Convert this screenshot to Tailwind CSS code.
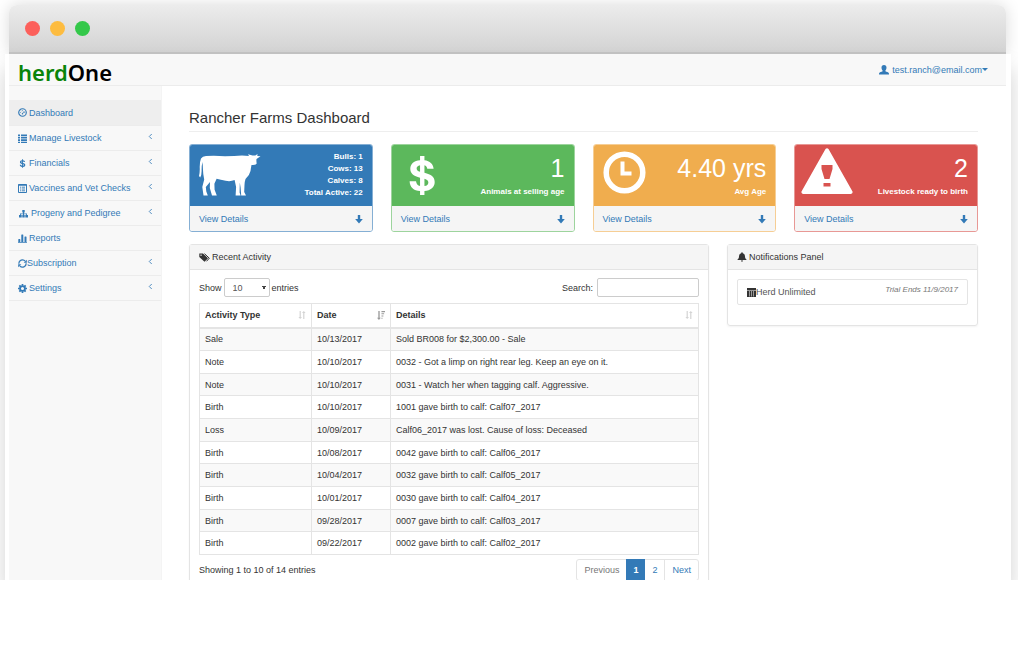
<!DOCTYPE html>
<html lang="en">
<head>
<meta charset="utf-8">
<meta name="viewport" content="width=device-width, initial-scale=1">
<title>herdOne - Rancher Farms Dashboard</title>
<script src="https://cdn.jsdelivr.net/npm/@tailwindcss/browser@4"></script>
</head>
<body class="flex h-screen flex-col bg-white pb-[66px] font-['Liberation_Sans',Arial,sans-serif] text-[9px] leading-3 text-[#333]">

<svg class="hidden" aria-hidden="true">
  <symbol id="down" viewBox="0 0 10 12"><path d="M3.500 1h3v5h3.300L5 11.500.2 6h3.300z"/></symbol>
  <symbol id="left" viewBox="0 0 6 8"><path d="M4.500 1 1.500 4l3 3" fill="none" stroke="currentColor" stroke-width="1"/></symbol>
  <symbol id="dollar" viewBox="0 0 28 42"><path d="M12 1h4.500v4.500c5.500.6 9 3.700 9.400 8.700h-6.500c-.3-2-1.200-3.200-2.900-3.700v7.700c6.800 1.700 10.500 4 10.500 9.500 0 5.400-4 8.700-10.500 9.300V41H12v-4C5.500 36.400 1.600 33 1.300 26.800h6.600c.3 2.700 1.700 4.300 4.100 4.900v-8.400C5.500 21.600 2 19.400 2 14.200c0-5 4-8.200 10-8.700zm0 9.400c-2.300.4-3.500 1.600-3.500 3.400 0 1.700 1 2.700 3.500 3.400zm4.500 13.900v7.500c2.700-.4 4-1.700 4-3.700 0-2-1.200-3-4-3.800z"/></symbol>
  <symbol id="sort" viewBox="0 0 10 10"><path d="M2 0h1.500v7.500H5L2.750 10 .5 7.500H2zM6.500 10H8V2.500h1.500L7.250 0 5 2.500h1.500z"/></symbol>
</svg>

<div class="flex min-h-0 flex-1 flex-col overflow-hidden pt-[5px] pr-[7px] pl-[5px]">

    <div class="mr-[5px] ml-1 flex h-[49px] shrink-0 items-center gap-[10px] rounded-t-lg border-b-2 border-[#c4c4c4] bg-linear-to-b from-[#ececec] to-[#d3d3d3] px-4 shadow-[0_0_16px_rgba(0,0,0,0.15)]">
      <span class="size-[15px] rounded-full bg-[#fc605b]"></span>
      <span class="size-[15px] rounded-full bg-[#fdbc40]"></span>
      <span class="size-[15px] rounded-full bg-[#34c84a]"></span>
    </div>

    <div class="flex min-h-0 flex-1 flex-col bg-white pr-[5px] pl-1 shadow-[0_14px_20px_rgba(0,0,0,0.18)]">
      <header class="flex h-8 shrink-0 items-center justify-between border-b border-[#ececec] bg-[#f8f8f8] pr-[18px] pl-[9px]">
        <a href="#" class="pt-1 font-['Noto_Sans','Open_Sans',sans-serif] text-[22px] leading-6 font-semibold text-black"><span class="text-[#0a840a]">herd</span>One</a>
        <button type="button" class="flex items-center text-[#337ab7]">
          <svg class="mr-[3px] size-[10px]" viewBox="0 0 10 10" fill="currentColor"><path d="M5 0c1.700 0 2.500 1 2.500 2.500 0 1.300-.5 2.300-1.100 3v.8c1.100.6 3 1 3.400 1.700.2.400.2 1 .2 1.500H0c0-.5 0-1.100.2-1.500.4-.7 2.300-1.100 3.400-1.700v-.8c-.6-.7-1.100-1.700-1.100-3C2.500 1 3.300 0 5 0z"/></svg>
          test.ranch@email.com
          <svg class="h-[3px] w-[6px]" viewBox="0 0 6 3" fill="currentColor"><path d="M0 0h6L3 3z"/></svg>
        </button>
      </header>

      <div class="flex min-h-0 flex-1">
        <nav class="w-[153px] shrink-0 border-r border-[#f4f4f4] bg-[#f8f8f8] pt-[14px] text-[#337ab7]">
          <ul class="*:h-[25px] *:border-b *:border-[#ececec]">
            <li class="h-[26px]! bg-[#eee]"><a href="#" class="flex h-full items-center gap-[2px] px-[9px]">
              <svg class="size-[9px]" viewBox="0 0 10 10" fill="none" stroke="currentColor"><circle cx="5" cy="5" r="4.200" stroke-width="1.300"/><path d="M5 6.200 7 3.500M2.500 5h.8M3.400 3l.5.600M5 2.200v.8M7 5h.8" stroke-width=".9"/><circle cx="5" cy="6.300" r=".8" fill="currentColor" stroke="none"/></svg>
              Dashboard</a></li>
            <li><a href="#" class="flex h-full items-center gap-[2px] px-[9px]">
              <svg class="size-[9px]" viewBox="0 0 9 9" fill="currentColor"><path d="M0 .5h2v1.700H0zM3 .5h6v1.700H3zM0 2.900h2v1.700H0zM3 2.900h6v1.700H3zM0 5.300h2V7H0zM3 5.300h6V7H3zM0 7.700h2V9H0zM3 7.700h6V9H3z"/></svg>
              Manage Livestock<svg class="mr-[-1px] mb-1 ml-auto h-[7px] w-[5px]"><use href="#left"/></svg></a></li>
            <li><a href="#" class="flex h-full items-center gap-[2px] px-[9px]">
              <svg class="size-[9px]" fill="currentColor"><use href="#dollar"/></svg>
              Financials<svg class="mr-[-1px] mb-1 ml-auto h-[7px] w-[5px]"><use href="#left"/></svg></a></li>
            <li><a href="#" class="flex h-full items-center gap-[2px] px-[9px]">
              <svg class="size-[9px]" viewBox="0 0 9 9" fill="none" stroke="currentColor"><path d="M.5.500h8v8h-8z"/><path d="M.5 1h8" stroke-width="1.500"/><path d="M2 3.200h1M3.700 3.200H7M2 5h1M3.700 5H7M2 6.800h1M3.700 6.800H7" stroke-width=".9"/></svg>
              Vaccines and Vet Checks<svg class="mr-[-1px] mb-1 ml-auto h-[7px] w-[5px]"><use href="#left"/></svg></a></li>
            <li><a href="#" class="flex h-full items-center gap-[3px] px-[9px]">
              <svg class="ml-px size-[9px]" viewBox="0 0 9 9" fill="currentColor"><path d="M3.300 1h2.400v2.500H5v1h3V6h1v2.500H6.300V6h.9v-.8H5V6h.7v2.500H3.300V6H4v-.8H1.800V6h.9v2.500H0V6h1V4.500h3v-1h-.7z"/></svg>
              Progeny and Pedigree<svg class="mr-[-1px] mb-1 ml-auto h-[7px] w-[5px]"><use href="#left"/></svg></a></li>
            <li><a href="#" class="flex h-full items-center gap-[2px] px-[9px]">
              <svg class="size-[9px]" viewBox="0 0 9 9" fill="currentColor"><path d="M.3 5.500q0-.5.500-.5h1q.5 0 .5.500V8H.300zM3.300 1q0-.5.500-.5h1q.5 0 .5.500v7h-2zM6.500 3q0-.5.500-.5h1q.5 0 .5.500v5h-2zM0 8.200h9V9H0z"/></svg>
              Reports</a></li>
            <li><a href="#" class="flex h-full items-center px-[9px]">
              <svg class="size-[9px]" viewBox="0 0 10 10" fill="none" stroke="currentColor" stroke-width="1.400"><path d="M1 5.200A4 4 0 0 1 8 2.300M9 4.800A4 4 0 0 1 2 7.700"/><path d="M9.800.700v3.500H6.300zM.2 9.300V5.800h3.500z" fill="currentColor" stroke="none"/></svg>
              Subscription<svg class="mr-[-1px] mb-1 ml-auto h-[7px] w-[5px]"><use href="#left"/></svg></a></li>
            <li><a href="#" class="flex h-full items-center gap-[2px] px-[9px]">
              <svg class="size-[9px]" viewBox="0 0 10 10" fill="none" stroke="currentColor"><circle cx="5" cy="5" r="2.700" stroke-width="2"/><path d="M5 0v2M5 8v2M0 5h2M8 5h2M1.500 1.500l1.400 1.400M7.100 7.100l1.400 1.400M8.500 1.500 7.100 2.900M2.900 7.100 1.500 8.500" stroke-width="1.900"/></svg>
              Settings<svg class="mr-[-1px] mb-1 ml-auto h-[7px] w-[5px]"><use href="#left"/></svg></a></li>
          </ul>
        </nav>

        <main class="min-w-0 flex-1 overflow-hidden pr-7 pl-[27px]">
          <h1 class="mb-3 border-b border-[#eee] pt-[22px] pb-[3px] text-[15px] leading-5">Rancher Farms Dashboard</h1>

          <section class="grid grid-cols-4 gap-[18px]">
            <article class="overflow-hidden rounded-[3px] border border-[#337ab7]/60">
              <div class="flex h-[61px] items-start justify-between bg-[#337ab7] px-[9px] text-white">
                <svg class="mt-[9px] h-[42px] w-[62px]" viewBox="0 0 62 42" fill="currentColor"><path d="M2 4.500Q3.500 2 7 2q9-.8 19 .3Q36 2 43 1.500l7 .5-1-1.800L53.500 1.500h2.800L58.500 0l-.2 2L61.500 2.300 57.500 5q-.3 2 .2 4.500Q56.500 11.500 52.500 11q-.6 3-1 6-1 4.500-5 8-1 3-1 6l-.3 7 1.800 3.500h-4.800l-.6-8-.8-5-.2 10 1 3h-5l.5-8.500-1.500-7q-4 1.800-9 .8-5-1.200-9-2l-2.200 5 .2 6 2.200 5.700H13L10.800 34l.2-6-4.200 5 .5 4.500 1.500 4H4.500L3.300 33l1.900-7.500Q4 20 4 16L3.600 8Q2.600 11 2.600 16q.2 5-1.400 7.500L0 22q1-4 .7-9Q.7 7.500 2 4.500z"/></svg>
                <p class="pt-[6px] text-right text-[8px] leading-3 font-bold">Bulls: 1<br>Cows: 13<br>Calves: 8<br>Total Active: 22</p>
              </div>
              <a href="#" class="flex h-[25px] items-center justify-between bg-[#f5f5f5] px-[9px] text-[#337ab7]">View Details<svg class="h-[10px] w-[8px]" fill="currentColor"><use href="#down"/></svg></a>
            </article>

            <article class="overflow-hidden rounded-[3px] border border-[#5cb85c]/60">
              <div class="flex h-[61px] items-start justify-between bg-[#5cb85c] px-[9px] text-white">
                <svg class="mt-[10px] ml-[7px] h-[41px] w-[28px]" fill="currentColor"><use href="#dollar"/></svg>
                <p class="pt-[9px] text-right text-[8px] leading-3 font-bold"><span class="block text-[25px] leading-7 font-normal">1</span><span class="mt-1 block">Animals at selling age</span></p>
              </div>
              <a href="#" class="flex h-[25px] items-center justify-between bg-[#f5f5f5] px-[9px] text-[#337ab7]">View Details<svg class="h-[10px] w-[8px]" fill="currentColor"><use href="#down"/></svg></a>
            </article>

            <article class="overflow-hidden rounded-[3px] border border-[#f0ad4e]/60">
              <div class="flex h-[61px] items-start justify-between bg-[#f0ad4e] px-[9px] text-white">
                <svg class="mt-[6px] size-[43px]" viewBox="0 0 43 43" fill="none" stroke="currentColor"><circle cx="21.500" cy="21.500" r="18.300" stroke-width="5.500"/><path d="M19.500 10.500v12h9" stroke-width="4"/></svg>
                <p class="pt-[9px] text-right text-[8px] leading-3 font-bold"><span class="block text-[25px] leading-7 font-normal">4.40 yrs</span><span class="mt-1 block">Avg Age</span></p>
              </div>
              <a href="#" class="flex h-[25px] items-center justify-between bg-[#f5f5f5] px-[9px] text-[#337ab7]">View Details<svg class="h-[10px] w-[8px]" fill="currentColor"><use href="#down"/></svg></a>
            </article>

            <article class="overflow-hidden rounded-[3px] border border-[#d9534f]/60">
              <div class="flex h-[61px] items-start justify-between bg-[#d9534f] pr-[9px] pl-[6px] text-white">
                <svg class="mt-[3px] h-[46px] w-[52px]" viewBox="0 0 52 46" fill="currentColor" fill-rule="evenodd"><path d="M24.500 1q1.500-1.700 3 0L51.500 43.500Q52 45.500 50 46H2Q0 45.500.5 43.500zM20.500 17v4L23.500 31h5L31.500 21v-4zM22.500 35v3.500h7V35z"/></svg>
                <p class="pt-[9px] text-right text-[8px] leading-3 font-bold"><span class="block text-[25px] leading-7 font-normal">2</span><span class="mt-1 block">Livestock ready to birth</span></p>
              </div>
              <a href="#" class="flex h-[25px] items-center justify-between bg-[#f5f5f5] px-[9px] text-[#337ab7]">View Details<svg class="h-[10px] w-[8px]" fill="currentColor"><use href="#down"/></svg></a>
            </article>
          </section>

          <div class="mt-3 grid grid-cols-3 items-start gap-[18px]">
            <section class="col-span-2 rounded-[3px] border border-[#e4e4e4] shadow-xs">
              <h2 class="flex h-[25px] items-center gap-[2px] border-b border-[#e4e4e4] bg-[#f5f5f5] px-[9px]">
                <svg class="h-[9px] w-[11px]" viewBox="0 0 11 9"><path fill="currentColor" fill-rule="evenodd" d="M.3.500h3.700L9 5.200 5.500 8.800.300 4zM2 1.500a.7.700 0 1 0 .1 0z"/><path d="m5.500.700 4.800 4.500L7.500 8.300" fill="none" stroke="currentColor"/></svg>
                Recent Activity</h2>
              <div class="px-[9px] pt-[8px] pb-4">
                <div class="mb-[6px] flex items-center justify-between">
                  <label class="flex items-center gap-[2px]">Show
                    <select class="h-[19px] w-[46px] appearance-none rounded-[2px] border border-[#ccc] bg-white bg-[linear-gradient(to_bottom_left,#444_50%,transparent_50%),linear-gradient(to_bottom_right,#444_50%,transparent_50%)] bg-[length:2px_4px] bg-[position:37px_7px,39px_7px] bg-no-repeat pl-2 text-[9px] text-[#555]"><option>10</option><option>25</option><option>50</option></select>
                    entries</label>
                  <label class="flex items-center gap-1">Search:
                    <input type="search" class="h-[19px] w-[102px] rounded-[2px] border border-[#ccc] bg-white px-1"></label>
                </div>
                <table class="w-full table-fixed border-collapse border border-[#e4e4e4] text-left [&_td]:border [&_td]:border-[#e4e4e4] [&_td]:px-[5px] [&_td]:py-0 [&_th]:border [&_th]:border-b-2 [&_th]:border-[#e4e4e4] [&_th]:px-[5px]">
                  <thead>
                    <tr class="h-6">
                      <th class="w-[112px]"><div class="flex items-center justify-between">Activity Type<svg class="size-2 text-[#d4d4d4]" fill="currentColor"><use href="#sort"/></svg></div></th>
                      <th class="w-[79px]"><div class="flex items-center justify-between">Date<svg class="h-[9px] w-2 text-[#999]" viewBox="0 0 9 10" fill="currentColor"><path d="M1.500 0H3v7.500h1.300L2.200 10 0 7.500h1.500zM5 0h4v1.300H5zM5 2.500h3v1.200H5zM5 5h2.200v1.200H5zM5 7.500h1.200v1.200H5z"/></svg></div></th>
                      <th><div class="flex items-center justify-between">Details<svg class="size-2 text-[#d4d4d4]" fill="currentColor"><use href="#sort"/></svg></div></th>
                    </tr>
                  </thead>
                  <tbody class="*:h-[23px] *:odd:bg-[#f9f9f9] *:nth-[3n]:h-[22px]">
                    <tr><td>Sale</td><td>10/13/2017</td><td>Sold BR008 for $2,300.00 - Sale</td></tr>
                    <tr><td>Note</td><td>10/10/2017</td><td>0032 - Got a limp on right rear leg. Keep an eye on it.</td></tr>
                    <tr><td>Note</td><td>10/10/2017</td><td>0031 - Watch her when tagging calf. Aggressive.</td></tr>
                    <tr><td>Birth</td><td>10/10/2017</td><td>1001 gave birth to calf: Calf07_2017</td></tr>
                    <tr><td>Loss</td><td>10/09/2017</td><td>Calf06_2017 was lost. Cause of loss: Deceased</td></tr>
                    <tr><td>Birth</td><td>10/08/2017</td><td>0042 gave birth to calf: Calf06_2017</td></tr>
                    <tr><td>Birth</td><td>10/04/2017</td><td>0032 gave birth to calf: Calf05_2017</td></tr>
                    <tr><td>Birth</td><td>10/01/2017</td><td>0030 gave birth to calf: Calf04_2017</td></tr>
                    <tr><td>Birth</td><td>09/28/2017</td><td>0007 gave birth to calf: Calf03_2017</td></tr>
                    <tr><td>Birth</td><td>09/22/2017</td><td>0002 gave birth to calf: Calf02_2017</td></tr>
                  </tbody>
                </table>
                <div class="mt-1 flex items-center justify-between">
                  <p>Showing 1 to 10 of 14 entries</p>
                  <div class="flex h-[22px] rounded-[3px] border border-[#e4e4e4] text-[#337ab7]">
                    <button type="button" class="px-[7px] text-[#777]">Previous</button>
                    <button type="button" class="-my-px bg-[#337ab7] px-[7px] font-bold text-white">1</button>
                    <button type="button" class="px-[7px]">2</button>
                    <button type="button" class="border-l border-[#e4e4e4] px-[7px]">Next</button>
                  </div>
                </div>
              </div>
            </section>

            <section class="rounded-[3px] border border-[#e4e4e4] shadow-xs">
              <h2 class="flex h-[25px] items-center gap-[2px] border-b border-[#e4e4e4] bg-[#f5f5f5] px-[9px]">
                <svg class="size-[10px]" viewBox="0 0 10 10" fill="currentColor"><path d="M5 .300q.8 0 .8.900C7.400 1.700 8 3 8 4.500c0 1.500.6 2.300 1.500 3V8h-9v-.5C1.400 6.800 2 6 2 4.500 2 3 2.600 1.700 4.200 1.200q0-.9.800-.9zM3.900 8.600h2.200q0 1.100-1.100 1.100T3.900 8.600z"/></svg>
                Notifications Panel</h2>
              <div class="px-[9px] pt-[9px] pb-5">
                <a href="#" class="flex h-[26px] items-center justify-between rounded-[2px] border border-[#e4e4e4] px-[9px] text-[#555]">
                  <span class="flex items-center"><svg class="size-[9px] text-[#333]" viewBox="0 0 9 9" fill="currentColor" fill-rule="evenodd"><path d="M0 0h9v2H0zM0 2.600h9V9H0zM2 3v5.500h.5V3zM4.300 3v5.500h.5V3zM6.500 3v5.500H7V3z"/></svg>Herd Unlimited</span>
                  <em class="pb-1 text-[8px] text-[#777]">Trial Ends 11/9/2017</em>
                </a>
              </div>
            </section>
          </div>
        </main>
      </div>
    </div>
</div>
</body>
</html>
